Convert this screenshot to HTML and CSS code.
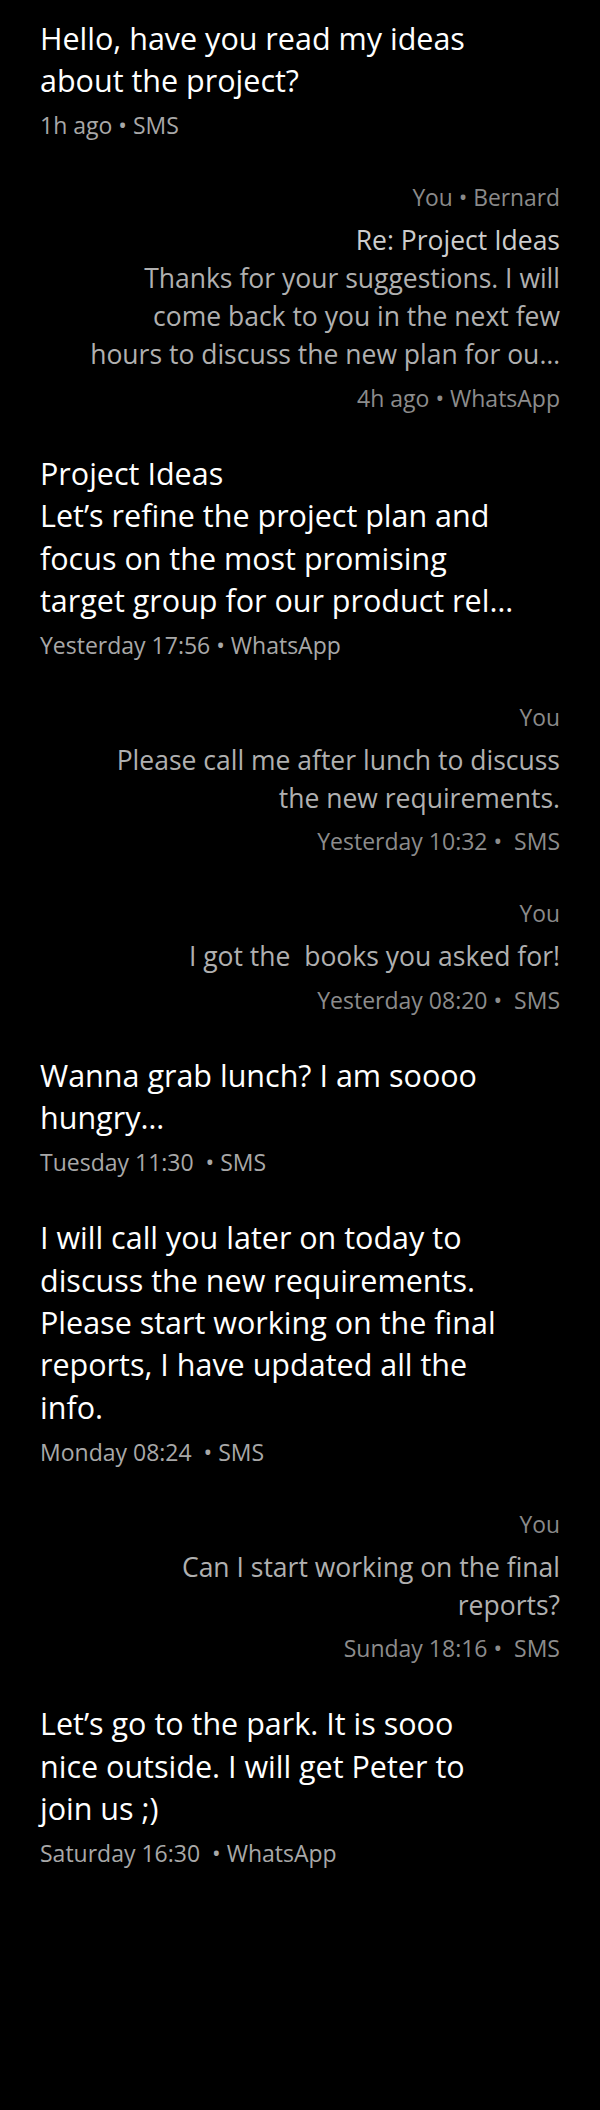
FILE: index.html
```html
<!DOCTYPE html>
<html lang="en">
<head>
<meta charset="utf-8">
<title>Messages</title>
<link rel="stylesheet" href="styles.css">
</head>
<body>
<main class="thread">
  <article class="msg in">
    <p class="body">Hello, have you read my ideas about the project?</p>
    <p class="meta">1h ago • SMS</p>
  </article>

  <article class="msg out">
    <p class="from">You • Bernard</p>
    <p class="subject">Re: Project Ideas</p>
    <p class="body">Thanks for your suggestions. I will come back to you in the next few hours to discuss the new plan for ou…</p>
    <p class="meta">4h ago • WhatsApp</p>
  </article>

  <article class="msg in">
    <p class="body">Project Ideas<br>Let’s refine the project plan and focus on the most promising target group for our product rel…</p>
    <p class="meta">Yesterday 17:56 • WhatsApp</p>
  </article>

  <article class="msg out">
    <p class="from">You</p>
    <p class="body">Please call me after lunch to discuss the new requirements.</p>
    <p class="meta">Yesterday 10:32 •&nbsp; SMS</p>
  </article>

  <article class="msg out">
    <p class="from">You</p>
    <p class="body">I got the&nbsp; books you asked for!</p>
    <p class="meta">Yesterday 08:20 •&nbsp; SMS</p>
  </article>

  <article class="msg in">
    <p class="body">Wanna grab lunch? I am soooo hungry…</p>
    <p class="meta">Tuesday 11:30 &nbsp;• SMS</p>
  </article>

  <article class="msg in">
    <p class="body">I will call you later on today to discuss the new requirements. Please start working on the final reports, I have updated all the info.</p>
    <p class="meta">Monday 08:24 &nbsp;• SMS</p>
  </article>

  <article class="msg out">
    <p class="from">You</p>
    <p class="body">Can I start working on the final reports?</p>
    <p class="meta">Sunday 18:16 •&nbsp; SMS</p>
  </article>

  <article class="msg in">
    <p class="body">Let’s go to the park. It is sooo nice outside. I will get Peter to join us ;)</p>
    <p class="meta">Saturday 16:30 &nbsp;• WhatsApp</p>
  </article>
</main>
</body>
</html>
```
FILE: styles.css
```css
html, body {
  margin: 0;
  padding: 0;
  background: #000;
}

body {
  font-family: "Open Sans", "Noto Sans", "Liberation Sans", sans-serif;
  color: #fff;
  min-height: 2110px;
}

.thread {
  display: flex;
  flex-direction: column;
  gap: 39px;
  padding: 17px 40px 0;
}

.msg p {
  margin: 0;
}

.msg.in {
  align-self: flex-start;
  max-width: 476px;
  text-align: left;
}

.msg.out {
  align-self: flex-end;
  max-width: 476px;
  margin-top: 4px;
  text-align: right;
}

.msg.in .body {
  font-size: 30.5px;
  line-height: 42.4px;
  color: #fff;
}

.msg.out .body {
  font-size: 26.5px;
  line-height: 38px;
  color: #b0b0b0;
}

.from {
  font-size: 22.8px;
  line-height: 30px;
  color: #8a8a8a;
  margin-bottom: 8px !important;
}

.subject {
  font-size: 26.5px;
  line-height: 38px;
  color: #cdcdcd;
}

.meta {
  font-size: 23px;
  line-height: 30px;
  margin-top: 8.5px !important;
}

.msg.in .meta {
  color: #a8a8a8;
}

.msg.out .meta {
  color: #8c8c8c;
  margin-top: 9.5px !important;
}
```
